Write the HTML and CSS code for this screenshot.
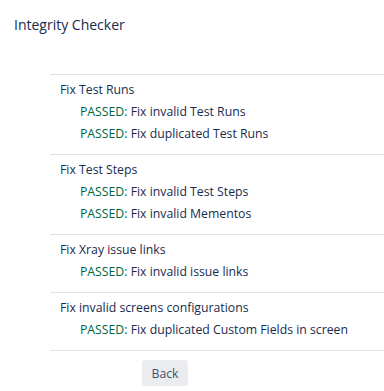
FILE: index.html
```html
<!DOCTYPE html>
<html lang="en">
<head>
<meta charset="utf-8">
<title>Integrity Checker</title>
<link rel="stylesheet" href="styles.css">
</head>
<body>
<div class="page">
  <h1 class="title">Integrity Checker</h1>
  <div class="checks">
    <section class="group">
      <div class="group-name">Fix Test Runs</div>
      <div class="item"><span class="ok">PASSED:</span> Fix invalid Test Runs</div>
      <div class="item"><span class="ok">PASSED:</span> Fix duplicated Test Runs</div>
    </section>
    <section class="group">
      <div class="group-name">Fix Test Steps</div>
      <div class="item"><span class="ok">PASSED:</span> Fix invalid Test Steps</div>
      <div class="item"><span class="ok">PASSED:</span> Fix invalid Mementos</div>
    </section>
    <section class="group">
      <div class="group-name">Fix Xray issue links</div>
      <div class="item"><span class="ok">PASSED:</span> Fix invalid issue links</div>
    </section>
    <section class="group">
      <div class="group-name">Fix invalid screens configurations</div>
      <div class="item"><span class="ok">PASSED:</span> Fix duplicated Custom Fields in screen</div>
    </section>
  </div>
  <div class="actions">
    <button class="btn" type="button">Back</button>
  </div>
</div>
</body>
</html>
```
FILE: styles.css
```css
html, body {
  margin: 0;
  padding: 0;
  background: #ffffff;
}
body {
  font-family: "Open Sans", "Noto Sans", sans-serif;
  font-size: 12.25px;
  color: #172b4d;
}
.page {
  padding-top: 15px;
}
.title {
  margin: 0 0 39px 14px;
  font-size: 14px;
  font-weight: 400;
  line-height: 20px;
  color: #172b4d;
}
.checks {
  margin-left: 50px;
  border-bottom: 1px solid #dfe1e6;
}
.group {
  border-top: 1px solid #dfe1e6;
  padding: 4px 0 9px 10px;
}
.group-name,
.item {
  line-height: 22px;
  color: #172b4d;
  white-space: nowrap;
}
.item {
  padding-left: 20px;
}
.ok {
  color: #006644;
}
.actions {
  padding: 9px 0 0 142px;
}
.btn {
  font-family: inherit;
  font-size: 12.25px;
  color: #42526e;
  background: #ebecf0;
  border: none;
  border-radius: 3px;
  width: 46px;
  height: 26px;
  padding: 0;
  cursor: pointer;
}
```
